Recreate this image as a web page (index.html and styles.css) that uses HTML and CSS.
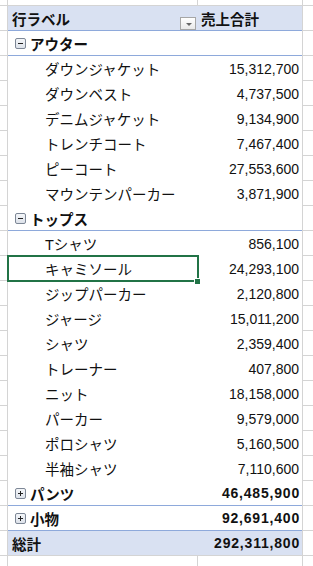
FILE: index.html
```html
<!DOCTYPE html>
<html lang="ja">
  <head>
    <meta charset="UTF-8" />
    <meta name="viewport" content="width=device-width, initial-scale=1.0" />
    <title>売上集計</title>
    <link rel="stylesheet" href="styles.css">
  </head>
  <body>
    <div class="sheet">
      <div class="pivot">
        <div class="row head">
          <div class="cell label">行ラベル<span class="drop"></span></div>
          <div class="cell caption">売上合計</div>
        </div>

        <div class="row group">
          <div class="cell label"><span class="toggle minus"></span>アウター</div>
          <div class="cell num"></div>
        </div>
        <div class="row item"><div class="cell label">ダウンジャケット</div><div class="cell num">15,312,700</div></div>
        <div class="row item"><div class="cell label">ダウンベスト</div><div class="cell num">4,737,500</div></div>
        <div class="row item"><div class="cell label">デニムジャケット</div><div class="cell num">9,134,900</div></div>
        <div class="row item"><div class="cell label">トレンチコート</div><div class="cell num">7,467,400</div></div>
        <div class="row item"><div class="cell label">ピーコート</div><div class="cell num">27,553,600</div></div>
        <div class="row item"><div class="cell label">マウンテンパーカー</div><div class="cell num">3,871,900</div></div>

        <div class="row group">
          <div class="cell label"><span class="toggle minus"></span>トップス</div>
          <div class="cell num"></div>
        </div>
        <div class="row item"><div class="cell label">Tシャツ</div><div class="cell num">856,100</div></div>
        <div class="row item"><div class="cell label">キャミソール<span class="sel"><i></i></span></div><div class="cell num">24,293,100</div></div>
        <div class="row item"><div class="cell label">ジップパーカー</div><div class="cell num">2,120,800</div></div>
        <div class="row item"><div class="cell label">ジャージ</div><div class="cell num">15,011,200</div></div>
        <div class="row item"><div class="cell label">シャツ</div><div class="cell num">2,359,400</div></div>
        <div class="row item"><div class="cell label">トレーナー</div><div class="cell num">407,800</div></div>
        <div class="row item"><div class="cell label">ニット</div><div class="cell num">18,158,000</div></div>
        <div class="row item"><div class="cell label">パーカー</div><div class="cell num">9,579,000</div></div>
        <div class="row item"><div class="cell label">ポロシャツ</div><div class="cell num">5,160,500</div></div>
        <div class="row item"><div class="cell label">半袖シャツ</div><div class="cell num">7,110,600</div></div>

        <div class="row group closed">
          <div class="cell label"><span class="toggle plus"></span>パンツ</div>
          <div class="cell num">46,485,900</div>
        </div>
        <div class="row group closed">
          <div class="cell label"><span class="toggle plus"></span>小物</div>
          <div class="cell num">92,691,400</div>
        </div>

        <div class="row total">
          <div class="cell label">総計</div>
          <div class="cell num">292,311,800</div>
        </div>
      </div>
    </div>
  </body>
</html>
```

FILE: styles.css
```css
body {
  margin: 0;
  font-family: "Liberation Sans", "Noto Sans CJK JP", sans-serif;
  font-size: 14.5px;
  color: #111;
  background: #fff;
}

/* worksheet with its gridlines */
.sheet {
  height: 566px;
  overflow: hidden;
  padding-top: 6px;
  box-sizing: border-box;
  background-image:
    linear-gradient(to right,
      transparent 0 7px, #d4d4d4 7px 8px,
      transparent 8px 197px, #d4d4d4 197px 198px,
      transparent 198px 302px, #d4d4d4 302px 303px,
      transparent 303px),
    repeating-linear-gradient(to bottom,
      transparent 0 5px, #d4d4d4 5px 6px, transparent 6px 25px);
}

.pivot {
  margin-left: 8px;
  width: 294px;
  background: #fff;
}

.row {
  display: grid;
  grid-template-columns: 189px 105px;
  height: 25px;
  box-sizing: border-box;
}

.cell {
  display: flex;
  align-items: center;
  white-space: nowrap;
}

.label {
  padding-left: 4px;
  position: relative;
}

.num {
  justify-content: flex-end;
  padding-right: 3px;
  font-size: 14px;
}

/* header row */
.head {
  background: #d9e1f2;
  border-bottom: 1px solid #8ea9db;
  font-weight: bold;
}

.caption {
  padding-left: 4px;
}

.drop {
  position: absolute;
  right: 1px;
  bottom: 0;
  width: 16px;
  height: 13px;
  box-sizing: border-box;
  border: 1px solid #a6a6a6;
  background: linear-gradient(#ffffff, #e9e9e9);
}

.drop::after {
  content: "";
  position: absolute;
  left: 5px;
  top: 5px;
  border-left: 3px solid transparent;
  border-right: 3px solid transparent;
  border-top: 3px solid #666;
}

/* category rows */
.group {
  border-bottom: 1px solid #8ea9db;
  font-weight: bold;
}

.group .label {
  padding-left: 7px;
  gap: 4px;
}

.group .num,
.total .num {
  font-weight: bold;
  letter-spacing: 0.8px;
  padding-right: 2px;
}

.toggle {
  width: 11px;
  height: 11px;
  box-sizing: border-box;
  border: 1px solid #7d8796;
  border-radius: 2px;
  background: linear-gradient(#f4f6f9, #dde2ea);
  position: relative;
  flex: none;
}

.toggle::before {
  content: "";
  position: absolute;
  left: 2px;
  top: 4px;
  width: 5px;
  height: 1px;
  background: #222;
}

.plus::after {
  content: "";
  position: absolute;
  left: 4px;
  top: 2px;
  width: 1px;
  height: 5px;
  background: #222;
}

.item .label {
  padding-left: 37px;
}

.total {
  background: #d9e1f2;
  font-weight: bold;
  height: 24px;
}

/* active cell */
.sel {
  position: absolute;
  left: -1px;
  top: -1px;
  width: 192px;
  height: 27px;
  box-sizing: border-box;
  border: 2px solid #217346;
}

.sel i {
  position: absolute;
  right: -3px;
  bottom: -4px;
  width: 5px;
  height: 5px;
  background: #217346;
  outline: 1px solid #fff;
}
```
